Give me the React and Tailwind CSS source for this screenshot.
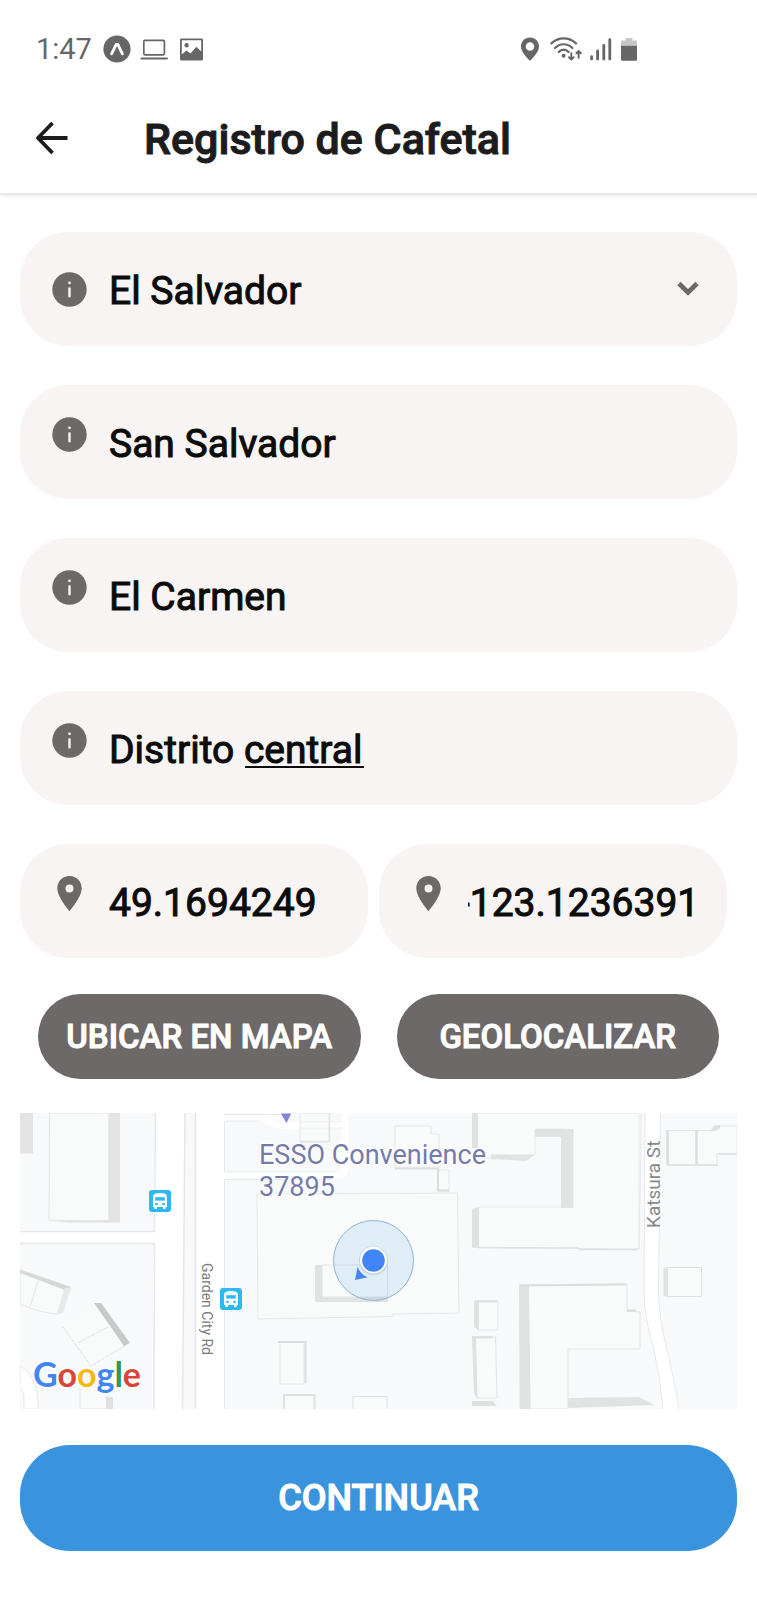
import { useEffect, useRef } from "react";

function InfoIcon({ className }) {
  return (
    <svg viewBox="0 0 35 35" className={className} aria-hidden="true">
      <circle cx="17.5" cy="17.5" r="17.2" fill="#6e6969" />
      <circle cx="17.5" cy="10.8" r="1.4" fill="#f7f4f3" />
      <rect x="16.3" y="15.2" width="2.4" height="10.2" rx="0.8" fill="#f7f4f3" />
    </svg>
  );
}

function PinIcon({ className }) {
  return (
    <svg viewBox="0 0 35 35" className={className} aria-hidden="true">
      <path
        fill="#6e6969"
        fillRule="evenodd"
        d="M17.5 0C10.7 0 5.3 5.4 5.3 12.2C5.3 21.4 17.5 35 17.5 35S29.7 21.4 29.7 12.2C29.7 5.4 24.3 0 17.5 0ZM17.5 8.4a4 4 0 1 1 0 8a4 4 0 1 1 0-8Z"
      />
    </svg>
  );
}

function StatusBar() {
  return (
    <div className="flex h-[97px] items-center justify-between pl-9 pr-[120px] text-[#666666]">
      <div className="flex items-center">
        <span className="text-[29px] leading-8">1:47</span>
        <svg viewBox="0 0 102 28" className="ml-2.5 h-7 w-[102px]" aria-hidden="true">
          <circle cx="15" cy="14" r="13.6" fill="#666666" />
          <path d="M9.6 18.8L14.2 9.4h1.6L20.4 18.8" fill="none" stroke="#fff" strokeWidth="2.8" strokeLinejoin="round" strokeLinecap="round" />
          <rect x="41.8" y="5.4" width="20.6" height="14.4" rx="1.2" fill="none" stroke="#666666" strokeWidth="1.7" />
          <rect x="38.4" y="22.6" width="27.6" height="2" rx="1" fill="#666666" />
          <path
            fill="#666666"
            fillRule="evenodd"
            d="M79.400 3.400H99.600a1.400 1.400 0 0 1 1.400 1.400v19.400a1.400 1.400 0 0 1-1.400 1.400H79.400a1.400 1.400 0 0 1-1.400-1.400V4.800a1.400 1.400 0 0 1 1.400-1.400ZM79.800 5.200V19.400l4.600-4l4 3l6-6.600l4.800 4.600V5.200ZM84.600 8a2.200 2.200 0 1 1 0 4.400a2.200 2.200 0 1 1 0-4.400Z"
          />
        </svg>
      </div>
      <svg viewBox="0 0 117 28" className="h-7 w-[117px]" aria-hidden="true">
        <path
          fill="#666666"
          fillRule="evenodd"
          d="M10 2.600C4.800 2.600 1 6.500 1 11.500C1 17.800 10 25.800 10 25.800S19 17.800 19 11.500C19 6.500 15.200 2.600 10 2.600ZM10 7.200a4.300 4.300 0 1 1 0 8.600a4.300 4.300 0 1 1 0-8.600Z"
        />
        <g fill="none" stroke="#666666" strokeWidth="2.200" strokeLinecap="round">
          <path d="M31.400 8.400C38.500 1.800 49 1.800 56 8.400" />
          <path d="M35 13C40.200 8 47.200 8 52.400 13" />
          <path d="M38.800 17C41.800 13.800 45.600 13.800 48.600 17" />
          <path d="M51.300 18.200V24M49 22.200L51.300 24.400L53.600 22.200M58.600 22.800V16.400M56.300 18.200L58.600 16L60.900 18.200" strokeWidth="1.900" />
          <path d="M71.600 21.600V24M77.600 16V24M83.800 10.400V24M89.800 4.600V24" strokeWidth="2.800" />
        </g>
        <circle cx="43.600" cy="20.800" r="2" fill="#666666" />
        <path d="M101 5.600h4.600V3h6.800V5.600H117V10.800H101Z" fill="#c6c6c6" />
        <path d="M101 10.800H117V24.400a1.400 1.400 0 0 1-1.400 1.400H102.400a1.400 1.400 0 0 1-1.400-1.400Z" fill="#666666" />
      </svg>
    </div>
  );
}

function Field({ Icon, children }) {
  return (
    <label className="flex h-[114px] w-full min-w-0 rounded-[48px] bg-[#f7f4f3] pl-8 pr-7">
      <Icon className="mt-8 size-[35px] shrink-0" />
      {children}
    </label>
  );
}

const inputClass =
  "ml-[22px] block h-full w-full min-w-0 flex-1 bg-transparent pt-1 text-[39px] text-[#0c0c0c] outline-none [-webkit-text-stroke:1px_#0c0c0c]";

function LongitudeInput() {
  const ref = useRef(null);
  useEffect(() => {
    ref.current.scrollLeft = ref.current.scrollWidth;
  }, []);
  return <input ref={ref} aria-label="Longitud" className={inputClass} defaultValue="-123.1236391" />;
}

function BusStop({ x, y }) {
  return (
    <g transform={`translate(${x} ${y})`}>
      <rect width="22" height="22" rx="3" fill="#2cb9ef" />
      <path d="M4 17V7.500C4 4 6.500 3 11 3S18 4 18 7.500V17H16.600V19H14V17H8V19H5.400V17Z" fill="#fff" />
      <rect x="6.200" y="7.200" width="9.600" height="3.400" fill="#2cb9ef" />
      <circle cx="7.400" cy="14" r="1.300" fill="#2cb9ef" />
      <circle cx="14.600" cy="14" r="1.300" fill="#2cb9ef" />
    </g>
  );
}

function MapView() {
  return (
    <svg viewBox="0 0 717 296" className="mt-[34px] block h-auto w-full" role="img" aria-label="Mapa">
      <rect width="717" height="296" fill="#f8f9fb" />

      {/* buildings west of Garden City Rd */}
      <rect width="13" height="40.500" fill="#e3e3e3" />
      <path d="M29.500 0H89V109L29 107Z" fill="#f9fbfa" stroke="#e3e4e5" />
      <path d="M88.500 0H100V109.500H88.500Z" fill="#e3e3e3" />
      <path d="M29 107.500L88.500 107V109.500H50Z" fill="#e3e3e3" />
      <path d="M0 159L45 173L38 201Q20 200 0 191Z" fill="#f9fbfa" stroke="#e6e7e7" />
      <path d="M0 156.500L51 174L45 177L0 160Z" fill="#d6d7d7" />
      <path d="M45 175L51 175L43 200L36 202Z" fill="#e8e9e9" />
      <path d="M18.500 167L10 194" stroke="#e3e4e5" fill="none" />
      <path d="M43 214L75 192L106 232L71 253Z" fill="#f9fbfa" />
      <path d="M43 214L71 253L106 232M58 230L88 214" stroke="#dfe0e0" fill="none" strokeDasharray="4 1" />
      <path d="M74 190H81L110 230L104 233Z" fill="#c8c9c9" />
      <path d="M60 272H87V296H60Z" fill="#f9fbfa" stroke="#e6e7e7" />
      <rect x="86" y="284" width="7" height="12" fill="#e0e0e0" />
      <path d="M0 253Q19 264 18 296H4Q5 276 0 276Z" fill="#fff" stroke="#e9eaeb" />

      {/* forecourt driveways */}
      <path d="M204 4.500H243C258 4.500 252 0 270 0M243 4.500C256 17 270 12 326 12" fill="none" stroke="#fff" strokeWidth="7" />
      <path d="M204 62.500H318Q325 62.500 325 54V0" fill="none" stroke="#fff" strokeWidth="7" />
      <path d="M280 0H309V29H280Z" fill="#f9fbfa" stroke="#e6e7e7" />
      <path d="M280 9H322M280 15H322" stroke="#ededee" fill="none" />
      <path d="M280 28.500H309.500V0" stroke="#e3e4e5" strokeWidth="1.500" fill="none" />

      {/* station block */}
      <path d="M375 13H411V21H419V57H429V78H418V55H375Z" fill="#f9fbfa" stroke="#e4e5e5" />
      <path d="M375 55.500H418V77.500H429" fill="none" stroke="#dcdddd" strokeWidth="2" />
      <path d="M237 81L437.500 80L439 200L373 201L372 203.500L238 206Z" fill="#f9fbfa" stroke="#e6e7e7" />
      <path d="M295 152H302V184H368V189H295Z" fill="#e1e2e2" />
      <path d="M302 152H367.500V184H302Z" fill="#f9fbfa" stroke="#e3e4e5" />
      <path d="M260 229H284V271H260Z" fill="#f9fbfa" stroke="#e4e5e5" />
      <path d="M258 229H285.500V270" fill="none" stroke="#dcdddd" strokeWidth="2" />
      <path d="M264 296V282H294.500V296" fill="#f9fbfa" stroke="#e0e1e1" strokeWidth="2" />
      <path d="M333 296V283.500H367V296" fill="#f9fbfa" stroke="#e0e1e1" />

      {/* central complex */}
      <path d="M456 0H619V136L453 134.500V96L460 94H542V16H515V42L500 45H456Z" fill="#f9fbfa" stroke="#e8e9e9" />
      <rect x="452" y="0" width="6" height="35" fill="#e0e1e1" />
      <path d="M515 16H553.500V95H541V24H515Z" fill="#e1e2e2" />
      <path d="M471 41.500H515L506 48L471 46Z" fill="#e1e2e2" />
      <path d="M452 96L459 94V134.500H452Z" fill="#e0e1e1" />
      <path d="M458 134.500L558 135L560 136.500H618" fill="none" stroke="#dfe0e0" strokeWidth="1.500" />
      <path d="M500 172L607 171V198L620 199V236H548V296H500Z" fill="#f9fbfa" stroke="#e4e5e5" />
      <path d="M499 171.500H509L510.500 296H500Z" fill="#e0e1e1" />
      <path d="M500 172.500L606 171.500M607 197.500H616" fill="none" stroke="#dcdddd" strokeWidth="2" />
      <path d="M548 285L619 284L634 292L548 295Z" fill="#e1e2e2" />
      <path d="M455 188H478V217H458Z" fill="#f9fbfa" stroke="#e4e5e5" />
      <path d="M454 187.500H477V189.500H459V217L454 214Z" fill="#dfe0e0" />
      <path d="M455 224H475.500L477 285H457Z" fill="#f9fbfa" stroke="#e4e5e5" />
      <path d="M452 223H473V225.500H456L457.500 285L454 281Z" fill="#dfe0e0" />
      <path d="M452 288H473L477 293H452Z" fill="#dfe0e0" />

      {/* buildings east of Katsura St */}
      <path d="M648 17.500H695V13H717V41H697V52H648Z" fill="#f9fbfa" stroke="#e3e4e5" />
      <path d="M647.500 17V52M676.500 17V51" stroke="#dcdddd" strokeWidth="2.500" fill="none" />
      <path d="M647 52H698M697 41H717" stroke="#dfe0e0" strokeWidth="1.500" fill="none" />
      <path d="M691 17L694 12.500H700V15L696 18Z" fill="#dfe0e0" />
      <rect x="647" y="154.500" width="34.500" height="29" fill="#f9fbfa" stroke="#dfe0e0" />
      <rect x="643.500" y="154.500" width="4.500" height="29" fill="#e0e1e1" />

      {/* roads */}
      <path d="M0 118.500H134.500L135.500 0H204.500V296H134L134.500 130.500H0Z" fill="#fff" />
      <path d="M0 118.500H134.500L135.500 0M0 130.500H134.500L134 296" stroke="#e6e8ec" strokeWidth="1.500" fill="none" />
      <path d="M165 -2H175.500V298H162.500Z" fill="#f8f9fb" stroke="#e3e6ea" strokeWidth="1.500" />
      <path d="M270 1.500H204M204.500 59V8H240M204.500 296V66.500H310M204.500 59H316" stroke="#e6e8ec" fill="none" />
      <path d="M625 0H640.500L638.500 180Q639 205 647 237Q655 270 659 296H643Q640 262 633 232Q624 204 624 180Z" fill="#fff" />
      <path d="M625 0L624 180Q624 204 633 232Q640 262 643 296M640.500 0L638.500 180Q639 205 647 237Q655 270 659 296M621 0V24L619 136" stroke="#e6e8ec" fill="none" />

      {/* labels and markers */}
      <path d="M260 0H272L266.500 11Z" fill="#8285d0" stroke="#fff" />
      <g fontFamily="Roboto, sans-serif" stroke="#fff" strokeLinejoin="round" paintOrder="stroke">
        <text x="239" y="51" fontSize="27" fill="#757ba8" strokeWidth="2">ESSO Convenience</text>
        <text x="239" y="83" fontSize="27" fill="#757ba8" strokeWidth="2">37895</text>
        <text transform="translate(182 150) rotate(90)" fontSize="14" fill="#777b7e" strokeWidth="2">Garden City Rd</text>
        <text transform="translate(640 115) rotate(-90)" fontSize="19" fill="#86888a" strokeWidth="2">Katsura St</text>
      </g>
      <BusStop x={129} y={77} />
      <BusStop x={200} y={175} />
      <circle cx="353.500" cy="147.500" r="40" fill="#4a9de0" fillOpacity="0.140" stroke="#8fb3d3" />
      <path d="M337.700 153.700Q340 161 347.700 164.300L335 167Z" fill="#4285f4" />
      <circle cx="353.500" cy="147.500" r="14.500" fill="#c3d0da" />
      <circle cx="353.500" cy="147" r="13.500" fill="#fff" />
      <circle cx="353.500" cy="147.500" r="11.300" fill="#4285f4" />
      <text x="13" y="274" fontSize="34" fontFamily="Lato, sans-serif" fontWeight="700" stroke="#fff" strokeWidth="3" strokeLinejoin="round" paintOrder="stroke">
        <tspan fill="#4285f4">G</tspan>
        <tspan fill="#db4437">o</tspan>
        <tspan fill="#f4b912">o</tspan>
        <tspan fill="#4285f4">g</tspan>
        <tspan fill="#2f9950">l</tspan>
        <tspan fill="#db4437">e</tspan>
      </text>
    </svg>
  );
}

const secondaryButton =
  "h-[85px] flex-1 rounded-full bg-[#6e6969] text-[33px] font-medium leading-10 text-white [-webkit-text-stroke:1px_white]";

export default function App() {
  return (
    <div className="min-h-screen bg-white font-['Roboto',sans-serif] text-[#0c0c0c]">
      <header className="border-b-2 border-[#e6e6e6] shadow-[0_2px_4px_rgba(0,0,0,0.06)]">
        <StatusBar />
        <div className="flex h-24 items-start pl-9">
          <button type="button" aria-label="Volver" className="mt-6">
            <svg viewBox="0 0 32 34" className="h-[34px] w-8" aria-hidden="true">
              <path d="M31.500 17H2.500M16.500 2L2 17L16.500 32" fill="none" stroke="#1c1c1e" strokeWidth="3.800" strokeLinejoin="round" />
            </svg>
          </button>
          <h1 className="ml-[76px] mt-4 text-[43px] font-medium leading-[52px] text-[#1c1c1e] [-webkit-text-stroke:1px_#1c1c1e]">
            Registro de Cafetal
          </h1>
        </div>
      </header>

      <form className="flex flex-col px-5 pb-12 pt-[37px]" onSubmit={(e) => e.preventDefault()}>
        <div className="flex flex-col gap-[39px]">
          <label className="relative flex h-[114px] items-center rounded-[48px] bg-[#f7f4f3] pl-8">
            <InfoIcon className="size-[35px] shrink-0" />
            <select
              aria-label="País"
              className="ml-[22px] h-full min-w-0 flex-1 appearance-none bg-transparent pt-1 text-[39px] outline-none [-webkit-text-stroke:1px_#0c0c0c]"
              defaultValue="sv"
            >
              <option value="sv">El Salvador</option>
            </select>
            <svg viewBox="0 0 22 16" className="pointer-events-none absolute right-[38px] h-4 w-[22px]" aria-hidden="true">
              <path d="M2 2.500L11 11.500L20 2.500" fill="none" stroke="#6e6969" strokeWidth="4.600" />
            </svg>
          </label>
          <Field Icon={InfoIcon}>
            <input aria-label="Departamento" className={inputClass} defaultValue="San Salvador" />
          </Field>
          <Field Icon={InfoIcon}>
            <input aria-label="Municipio" className={inputClass} defaultValue="El Carmen" />
          </Field>
          <div className="relative flex">
            <Field Icon={InfoIcon}>
              <input aria-label="Distrito" className={inputClass} defaultValue="Distrito central" />
            </Field>
            <span className="absolute left-[225px] top-[75px] h-0.5 w-[119px] bg-[#0c0c0c]" />
          </div>
          <div className="flex gap-[11px] pr-2.5">
            <Field Icon={PinIcon}>
              <input aria-label="Latitud" className={inputClass} defaultValue="49.1694249" />
            </Field>
            <Field Icon={PinIcon}>
              <LongitudeInput />
            </Field>
          </div>
        </div>

        <div className="mt-9 flex gap-9 px-[18px]">
          <button type="button" className={secondaryButton}>UBICAR EN MAPA</button>
          <button type="button" className={secondaryButton}>GEOLOCALIZAR</button>
        </div>

        <MapView />

        <button
          type="submit"
          className="mt-9 h-[106px] rounded-[50px] bg-[#3993dd] text-[36px] font-medium leading-10 text-white [-webkit-text-stroke:1px_white]"
        >
          CONTINUAR
        </button>
      </form>
    </div>
  );
}
